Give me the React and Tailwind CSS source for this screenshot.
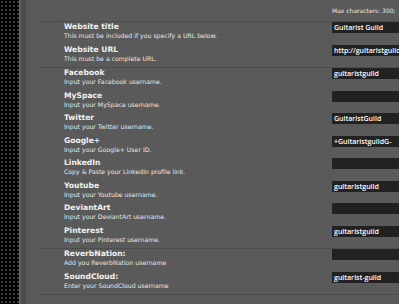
import React from 'react';

const groups = [
  [
    { title: 'Website title', desc: 'This must be included if you specify a URL below.', value: 'Guitarist Guild' },
    { title: 'Website URL', desc: 'This must be a complete URL.', value: 'http://guitaristguild.com' },
  ],
  [
    { title: 'Facebook', desc: 'Input your Facebook username.', value: 'guitaristguild' },
    { title: 'MySpace', desc: 'Input your MySpace username.', value: '' },
    { title: 'Twitter', desc: 'Input your Twitter username.', value: 'GuitaristGuild' },
    { title: 'Google+', desc: 'Input your Google+ User ID.', value: '+GuitaristguildG-' },
    { title: 'LinkedIn', desc: 'Copy & Paste your LinkedIn profile link.', value: '' },
    { title: 'Youtube', desc: 'Input your Youtube username.', value: 'guitaristguild' },
    { title: 'DeviantArt', desc: 'Input your DeviantArt username.', value: '' },
    { title: 'Pinterest', desc: 'Input your Pinterest username.', value: 'guitaristguild' },
  ],
  [
    { title: 'ReverbNation:', desc: 'Add you ReverbNation username', value: '' },
    { title: 'SoundCloud:', desc: 'Enter your SoundCloud username', value: 'guitarist-guild' },
  ],
];

const Row = ({ item }) => (
  <div className="flex h-[22.5px] items-start">
    <div className="w-[306px] shrink-0 pl-[38px]">
      <div className="whitespace-nowrap text-[7.6px] font-bold leading-[10px] text-[#f2f2f2]" style={{ fontFamily: '"DejaVu Sans", sans-serif' }}>
        {item.title}
      </div>
      <div className="whitespace-nowrap text-[6.2px] leading-[7px] text-[#e6e6e6]" style={{ fontFamily: '"DejaVu Sans", sans-serif' }}>
        {item.desc}
      </div>
    </div>
    <div className="h-[11px] min-w-0 flex-1 overflow-hidden whitespace-nowrap bg-[#222222] pl-[2px] text-[7px] font-semibold leading-[11px] text-white" style={{ fontFamily: '"Open Sans", sans-serif' }}>
      {item.value}
    </div>
  </div>
);

const App = () => {
  return (
    <div className="flex h-[304px] w-[399px] overflow-hidden bg-[#5a5a5a]">
      <div className="h-full w-[19px] shrink-0 bg-black bg-[radial-gradient(circle,#3c3c3c_0.9px,transparent_1.2px)] bg-[length:4px_4px]" />
      <div className="h-full w-[2px] shrink-0 bg-[#5f5f5f]" />
      <div className="h-full w-[5px] shrink-0 bg-[#4c4c4c]" />
      <div className="flex min-w-0 flex-1 flex-col">
        <div className="flex h-[21px] items-center">
          <div className="w-[306px] shrink-0" />
          <div className="whitespace-nowrap text-[6px] text-[#e8e8e8]" style={{ fontFamily: '"DejaVu Sans", sans-serif' }}>
            Max characters: 300;
          </div>
        </div>
        {groups.map((group, gi) => (
          <div key={gi} className="ml-[14px] border-t border-[#4d4d4d]">
            <div className="-ml-[14px]">
              {group.map((item) => (
                <Row key={item.title} item={item} />
              ))}
            </div>
          </div>
        ))}
        <div className="ml-[14px] border-t border-[#4d4d4d]" />
      </div>
    </div>
  );
};

export default App;
